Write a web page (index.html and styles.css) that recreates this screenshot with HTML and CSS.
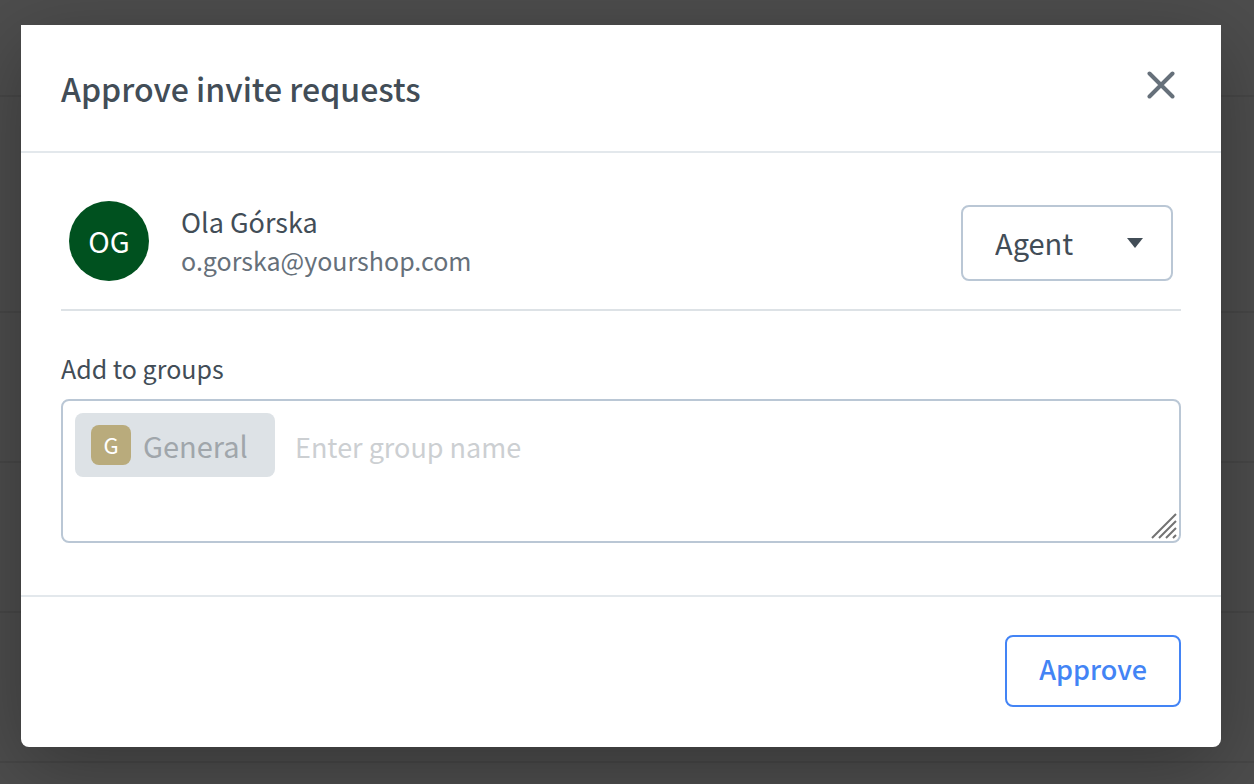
FILE: index.html
```
<!DOCTYPE html>
<html lang="en">
<head>
    <meta charset="UTF-8">
    <meta name="viewport" content="width=device-width, initial-scale=1.0">
    <title>Approve invite requests</title>
    <link rel="stylesheet" href="styles.css">
</head>
<body>
    <div class="backdrop" aria-hidden="true">
        <div class="backdrop-row head"></div>
        <div class="backdrop-row tall"></div>
        <div class="backdrop-row"></div>
        <div class="backdrop-row"></div>
        <div class="backdrop-row"></div>
    </div>

    <div class="overlay">
        <div class="modal" role="dialog" aria-labelledby="modalTitle">
            <header class="modal-header">
                <h1 class="title" id="modalTitle">Approve invite requests</h1>
                <button class="close-button" type="button" aria-label="Close">
                    <svg width="28" height="28" viewBox="0 0 28 28" fill="none" stroke="currentColor" stroke-width="4" stroke-linecap="round">
                        <path d="M2.5 2.5L25.5 25.5M25.5 2.5L2.5 25.5"/>
                    </svg>
                </button>
            </header>

            <div class="modal-body">
                <div class="request">
                    <div class="avatar">OG</div>
                    <div class="person">
                        <div class="name">Ola Górska</div>
                        <div class="email">o.gorska@yourshop.com</div>
                    </div>
                    <div class="role">
                        <select class="role-select" aria-label="Role">
                            <option>Agent</option>
                            <option>Admin</option>
                        </select>
                        <svg class="role-arrow" width="16" height="10" viewBox="0 0 16 10" fill="currentColor">
                            <path d="M0 0H16L8 10Z"/>
                        </svg>
                    </div>
                </div>

                <label class="label" for="groups">Add to groups</label>
                <div class="group-field">
                    <div class="tag">
                        <span class="tag-icon">G</span>
                        <span class="tag-name">General</span>
                    </div>
                    <input class="group-input" id="groups" type="text" placeholder="Enter group name">
                    <svg class="resize-grip" width="26" height="26" viewBox="0 0 26 26" fill="none" stroke="currentColor" stroke-width="2">
                        <path d="M1 25L25 1M8 25L25 8M15 25L25 15M22 25L25 22"/>
                    </svg>
                </div>
            </div>

            <footer class="modal-footer">
                <button class="approve-button" type="button">Approve</button>
            </footer>
        </div>
    </div>
</body>
</html>
```
FILE: styles.css
```
* {
    box-sizing: border-box;
}

body {
    margin: 0;
    min-height: 100vh;
    position: relative;
    overflow: hidden;
    background: #4d4d4d;
    color: #424d57;
    font-family: "Noto Sans CJK SC", "Noto Sans", sans-serif;
}

button,
input,
select {
    font-family: inherit;
    color: inherit;
}

/* Dimmed list behind the dialog */
.backdrop {
    position: absolute;
    inset: 0;
    overflow: hidden;
}

.backdrop-row {
    height: 150px;
    border-bottom: 2px solid #474747;
}

.backdrop-row.head {
    height: 97px;
}

.backdrop-row.tall {
    height: 216px;
}

.overlay {
    position: relative;
    padding: 25px 33px 37px 21px;
}

.modal {
    background: #fff;
    border-radius: 0 0 8px 8px;
    box-shadow: 0 20px 80px rgba(0, 0, 0, 0.3);
}

.modal-header {
    display: flex;
    align-items: flex-start;
    justify-content: space-between;
    padding: 40px;
    border-bottom: 2px solid #e3e8ec;
}

.title {
    margin: 0;
    font-size: 32px;
    line-height: 46px;
    font-weight: 500;
}

.close-button {
    display: flex;
    padding: 6px;
    border: none;
    background: none;
    color: #66707a;
    cursor: pointer;
}

.modal-body {
    padding: 0 40px 52px;
}

.request {
    display: flex;
    align-items: flex-end;
    padding: 48px 8px 28px;
    border-bottom: 2px solid #dde2e6;
}

.avatar {
    width: 80px;
    height: 80px;
    border-radius: 50%;
    background: #00511f;
    color: #fff;
    font-size: 29px;
    line-height: 78px;
    text-align: center;
}

.person {
    flex: 1;
    margin-left: 32px;
    padding-bottom: 2px;
    line-height: 38px;
}

.name {
    font-size: 27px;
}

.email {
    font-size: 25px;
    color: #66707a;
}

.role {
    position: relative;
}

.role-select {
    display: block;
    appearance: none;
    width: 212px;
    height: 76px;
    padding: 0 32px 2px;
    border: 2px solid #bac7d5;
    border-radius: 8px;
    background: #fff;
    font-size: 29px;
    cursor: pointer;
}

.role-arrow {
    position: absolute;
    top: 33px;
    right: 30px;
    pointer-events: none;
}

.label {
    display: block;
    margin: 36px 0 10px;
    font-size: 25px;
    line-height: 42px;
}

.group-field {
    position: relative;
    display: flex;
    align-items: flex-start;
    min-height: 144px;
    padding: 12px;
    border: 2px solid #bac7d5;
    border-radius: 8px;
}

.tag {
    display: flex;
    align-items: center;
    gap: 12px;
    width: 200px;
    height: 64px;
    padding: 0 16px;
    border-radius: 8px;
    background: #dde2e6;
    color: #a0a6ab;
    font-size: 29px;
    line-height: 38px;
}

.tag-icon {
    width: 40px;
    height: 40px;
    border-radius: 8px;
    background: #b9ab7c;
    color: #fff;
    font-size: 22px;
    text-align: center;
}

.group-input {
    flex: 1;
    min-width: 0;
    height: 66px;
    padding: 0 20px;
    border: none;
    outline: none;
    background: none;
    font-size: 27px;
}

.group-input::placeholder {
    color: #cccfd2;
    opacity: 1;
}

.resize-grip {
    position: absolute;
    right: 2px;
    bottom: 2px;
    color: #737373;
}

.modal-footer {
    display: flex;
    justify-content: flex-end;
    padding: 38px 40px 40px;
    border-top: 2px solid #e3e8ec;
}

.approve-button {
    height: 72px;
    padding: 0 32px 6px;
    border: 2px solid #4384f5;
    border-radius: 8px;
    background: #fff;
    color: #4384f5;
    font-size: 27px;
    font-weight: 500;
    cursor: pointer;
}
```
